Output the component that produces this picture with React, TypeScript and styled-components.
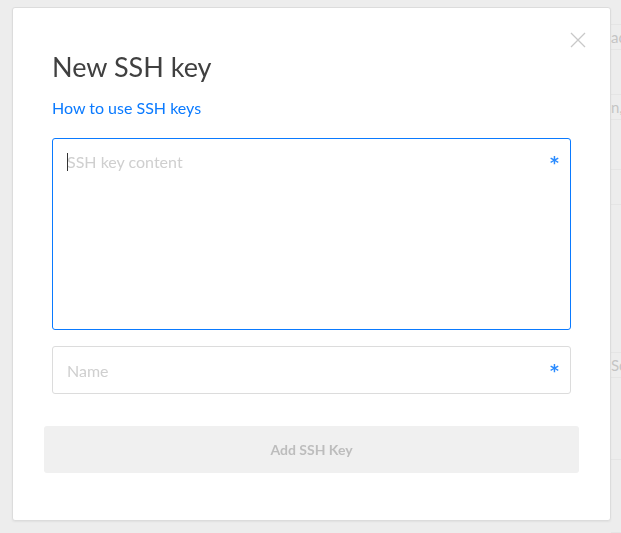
import React from 'react';
import styled, { createGlobalStyle } from 'styled-components';

const GlobalStyle = createGlobalStyle`
    * {
        box-sizing: border-box;
    }
    html,
    body {
        margin: 0;
        padding: 0;
        width: 100%;
        height: 100%;
        background: #ffffff;
        font-family: Lato, 'Open Sans', sans-serif;
    }
`;

export const PageBehind = styled.div`
    display: flex;
    flex-direction: column;
    width: 621px;
    height: 533px;
    padding-left: 611px;
    overflow: hidden;
`;

export const BehindRow = styled.div<{ $h: number }>`
    display: flex;
    align-items: center;
    flex-shrink: 0;
    height: ${(p) => p.$h}px;
    border-bottom: 1px solid #eaeaea;
    color: #999;
    font-size: 15px;
    white-space: nowrap;
`;

export const Backdrop = styled.div`
    position: fixed;
    inset: 0;
    display: flex;
    padding: 7px 10px 12px 12px;
    background: rgba(225, 225, 225, 0.6);
`;

export const Modal = styled.div`
    position: relative;
    display: flex;
    flex-direction: column;
    width: 599px;
    height: 514px;
    padding: 43px 39px 0 39px;
    background: #fff;
    border: 1px solid #dcdcdc;
    border-radius: 3px;
    box-shadow: 0 1px 2px rgba(0, 0, 0, 0.06);
`;

export const CloseButton = styled.button`
    position: absolute;
    top: 24px;
    right: 24px;
    width: 16px;
    height: 16px;
    padding: 0;
    border: 0;
    background: none;
    cursor: pointer;
    & svg {
        display: block;
    }
`;

export const Title = styled.h2`
    margin: 0;
    font-size: 27px;
    line-height: 32px;
    font-weight: 400;
    color: #404040;
`;

export const HelpLink = styled.a`
    display: block;
    margin-top: 15px;
    font-size: 16px;
    line-height: 20px;
    color: #0a7aff;
    text-decoration: none;
`;

export const Field = styled.div<{ $height: number; $focused?: boolean }>`
    position: relative;
    display: flex;
    height: ${(p) => p.$height}px;
    margin-top: ${(p) => (p.$focused ? 20 : 16)}px;
    border: 1px solid ${(p) => (p.$focused ? '#0a7aff' : '#dcdcdc')};
    border-radius: 3px;
    background: #fff;
`;

export const TextArea = styled.textarea`
    flex: 1;
    padding: 12px 40px 12px 14px;
    border: 0;
    outline: none;
    resize: none;
    font-family: Lato, 'Open Sans', sans-serif;
    font-size: 16px;
    line-height: 22px;
    color: #333;
    background: transparent;
    caret-color: #333;
    &::placeholder {
        color: #cfcfcf;
    }
`;

export const Input = styled.input`
    flex: 1;
    padding: 0 40px 0 14px;
    border: 0;
    outline: none;
    font-family: Lato, 'Open Sans', sans-serif;
    font-size: 16px;
    color: #333;
    background: transparent;
    &::placeholder {
        color: #cfcfcf;
    }
`;

export const Required = styled.span<{ $top: number }>`
    position: absolute;
    top: ${(p) => p.$top}px;
    right: 11px;
    color: #2a8bff;
    font-size: 17px;
    line-height: 17px;
    font-family: 'DejaVu Sans', sans-serif;
    font-weight: 700;
`;

export const Caret = styled.span`
    position: absolute;
    left: 14px;
    top: 14px;
    width: 1px;
    height: 18px;
    background: #333;
`;

export const SubmitButton = styled.button`
    display: flex;
    align-items: center;
    justify-content: center;
    height: 47px;
    margin: 32px -8px 0 -8px;
    border: 0;
    border-radius: 3px;
    background: #f0f0f0;
    color: #bdbdbd;
    font-family: Lato, 'Open Sans', sans-serif;
    font-size: 14px;
    font-weight: 700;
    cursor: not-allowed;
`;

const behindRows = [
    { h: 25, text: '' },
    { h: 25, text: 'ac' },
    { h: 45, text: '' },
    { h: 25, text: 'n,' },
    { h: 50, text: '' },
    { h: 35, text: '' },
    { h: 148, text: '' },
    { h: 25, text: 'So' },
    { h: 82, text: '' },
    { h: 73, text: '' },
];

const App: React.FC = () => {
    return (
        <>
            <GlobalStyle />
            <PageBehind>
                {behindRows.map((row, i) => (
                    <BehindRow key={i} $h={row.h}>
                        {row.text}
                    </BehindRow>
                ))}
            </PageBehind>
            <Backdrop>
                <Modal>
                    <CloseButton aria-label="Close">
                        <svg width="16" height="16" viewBox="0 0 16 16">
                            <path d="M1 1L15 15M15 1L1 15" stroke="#c8c8c8" strokeWidth="1.3" fill="none" />
                        </svg>
                    </CloseButton>
                    <Title>New SSH key</Title>
                    <HelpLink href="#">How to use SSH keys</HelpLink>
                    <Field $height={192} $focused>
                        <Caret />
                        <TextArea placeholder="SSH key content" />
                        <Required $top={16}>*</Required>
                    </Field>
                    <Field $height={48}>
                        <Input placeholder="Name" />
                        <Required $top={16}>*</Required>
                    </Field>
                    <SubmitButton disabled>Add SSH Key</SubmitButton>
                </Modal>
            </Backdrop>
        </>
    );
};

export default App;
